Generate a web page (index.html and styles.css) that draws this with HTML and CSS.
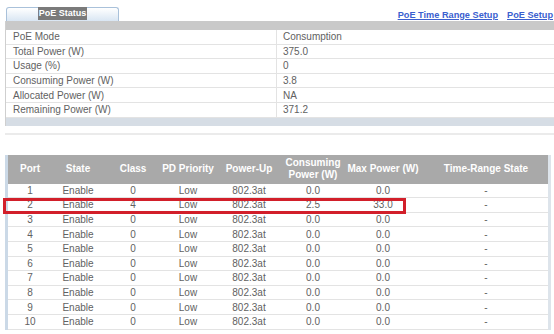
FILE: index.html
```html
<!DOCTYPE html>
<html>
<head>
<meta charset="utf-8">
<link rel="stylesheet" href="styles.css">
</head>
<body>
<div class="page">
  <div class="tabbar">
    <div class="tab"><span class="tab-label">PoE Status</span></div>
    <div class="links">
      <a class="link" href="#">PoE Time Range Setup</a>
      <a class="link" href="#">PoE Setup</a>
    </div>
  </div>
  <div class="panel">
    <div class="band"></div>
    <table class="info">
      <tr><td class="k">PoE Mode</td><td class="v">Consumption</td></tr>
      <tr><td class="k">Total Power (W)</td><td class="v">375.0</td></tr>
      <tr><td class="k">Usage (%)</td><td class="v">0</td></tr>
      <tr><td class="k">Consuming Power (W)</td><td class="v">3.8</td></tr>
      <tr><td class="k">Allocated Power (W)</td><td class="v">NA</td></tr>
      <tr><td class="k">Remaining Power (W)</td><td class="v">371.2</td></tr>
    </table>
    <div class="foot"></div>
  </div>
  <div class="divider"></div>
  <div class="ports-wrap">
    <table class="ports">
      <colgroup>
        <col style="width:44px"><col style="width:52px"><col style="width:58px"><col style="width:52px"><col style="width:70px"><col style="width:58px"><col style="width:82px"><col style="width:124px">
      </colgroup>
      <thead>
        <tr><th>Port</th><th>State</th><th>Class</th><th>PD Priority</th><th>Power-Up</th><th>Consuming<br>Power (W)</th><th>Max Power (W)</th><th>Time-Range State</th></tr>
      </thead>
      <tbody>
        <tr><td>1</td><td>Enable</td><td>0</td><td>Low</td><td>802.3at</td><td>0.0</td><td>0.0</td><td>-</td></tr>
        <tr><td>2</td><td>Enable</td><td>4</td><td>Low</td><td>802.3at</td><td>2.5</td><td>33.0</td><td>-</td></tr>
        <tr><td>3</td><td>Enable</td><td>0</td><td>Low</td><td>802.3at</td><td>0.0</td><td>0.0</td><td>-</td></tr>
        <tr><td>4</td><td>Enable</td><td>0</td><td>Low</td><td>802.3at</td><td>0.0</td><td>0.0</td><td>-</td></tr>
        <tr><td>5</td><td>Enable</td><td>0</td><td>Low</td><td>802.3at</td><td>0.0</td><td>0.0</td><td>-</td></tr>
        <tr><td>6</td><td>Enable</td><td>0</td><td>Low</td><td>802.3at</td><td>0.0</td><td>0.0</td><td>-</td></tr>
        <tr><td>7</td><td>Enable</td><td>0</td><td>Low</td><td>802.3at</td><td>0.0</td><td>0.0</td><td>-</td></tr>
        <tr><td>8</td><td>Enable</td><td>0</td><td>Low</td><td>802.3at</td><td>0.0</td><td>0.0</td><td>-</td></tr>
        <tr><td>9</td><td>Enable</td><td>0</td><td>Low</td><td>802.3at</td><td>0.0</td><td>0.0</td><td>-</td></tr>
        <tr><td>10</td><td>Enable</td><td>0</td><td>Low</td><td>802.3at</td><td>0.0</td><td>0.0</td><td>-</td></tr>
      </tbody>
    </table>
    <div class="highlight"></div>
  </div>
</div>
</body>
</html>
```

FILE: styles.css
```css
html, body {
  margin: 0;
  padding: 0;
  background: #ffffff;
  overflow: hidden;
}
body {
  width: 554px;
  height: 334px;
  font-family: "Liberation Sans", Arial, sans-serif;
  font-size: 10px;
  color: #616161;
}
.page {
  padding: 7px 0 0 5px;
}
.tabbar {
  display: flex;
  justify-content: space-between;
  align-items: flex-start;
  height: 14px;
  margin-right: 1px;
}
.tab {
  width: 111px;
  height: 13px;
  margin-left: 1px;
  border: 1px solid #a9c1da;
  border-bottom: none;
  border-radius: 3px 3px 0 0;
  background: linear-gradient(#ffffff, #d9e6f3);
  display: flex;
  justify-content: center;
  align-items: flex-start;
}
.tab-label {
  background: #7a7a7a;
  color: #ffffff;
  font-weight: bold;
  font-size: 9px;
  line-height: 13px;
  padding: 0 1px;
  margin-top: -1px;
}
.links {
  display: flex;
  gap: 9px;
  padding-top: 3px;
}
.link {
  color: #3b5fcf;
  font-weight: bold;
  font-size: 9.2px;
  text-decoration: underline;
}
.panel {
  border-left: 1px solid #cfcfcf;
}
.band {
  height: 9px;
  background: #c9c9c9;
}
.info {
  width: 100%;
  border-collapse: collapse;
}
.info td {
  height: 13.6px;
  padding: 0;
  border-bottom: 1px solid #e3e3e3;
  line-height: 13px;
  white-space: nowrap;
}
.info .k {
  width: 263px;
  padding-left: 7px;
  border-right: 1px solid #e3e3e3;
}
.info .v {
  padding-left: 6px;
}
.foot {
  height: 8px;
  background: #d6dde5;
}
.divider {
  height: 2px;
  margin-top: 7px;
  background: #ebebeb;
}
.ports-wrap {
  position: relative;
  margin-top: 20px;
  width: 540px;
  border-left: 3px solid #cbd9e7;
  border-right: 3px solid #dde4eb;
}
.ports {
  width: 540px;
  border-collapse: collapse;
  table-layout: fixed;
}
.ports th {
  height: 29px;
  padding: 0;
  background: #a9a9a9;
  color: #ffffff;
  font-weight: bold;
  font-size: 10px;
  line-height: 12px;
  text-align: center;
  white-space: nowrap;
}
.ports td {
  height: 13.6px;
  padding: 0;
  border-bottom: 1px solid #e3e3e3;
  line-height: 13px;
  text-align: center;
  white-space: nowrap;
}
.highlight {
  position: absolute;
  left: -5px;
  top: 43px;
  width: 397px;
  height: 10px;
  border: 3px solid #d21f2a;
}
```
